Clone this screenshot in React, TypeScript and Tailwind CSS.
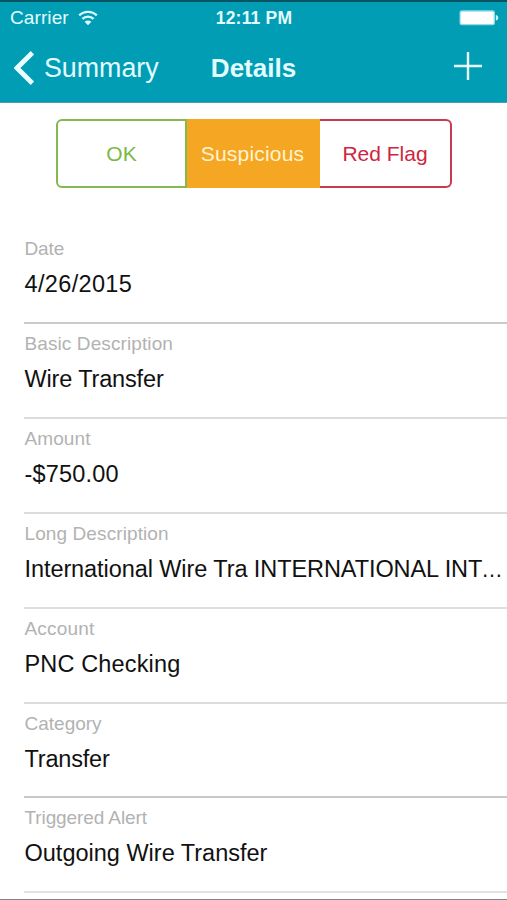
import React from 'react';

const fields = [
  { label: 'Date', value: '4/26/2015', labelSpacing: 'tracking-[-0.1px]', valueSpacing: 'tracking-[0.35px]', border: 'border-[#cbcbcb]' },
  { label: 'Basic Description', value: 'Wire Transfer', labelSpacing: 'tracking-[0.1px]', valueSpacing: 'tracking-[-0.15px]', border: 'border-[#dcdcdc]' },
  { label: 'Amount', value: '-$750.00', labelSpacing: 'tracking-[0.1px]', valueSpacing: 'tracking-[0.2px]', border: 'border-[#dcdcdc]' },
  { label: 'Long Description', value: 'International Wire Tra INTERNATIONAL INT', truncated: true, labelSpacing: 'tracking-[0.1px]', valueSpacing: 'tracking-[-0.08px]', border: 'border-[#dfdfdf]' },
  { label: 'Account', value: 'PNC Checking', labelSpacing: 'tracking-[0.2px]', valueSpacing: 'tracking-[0.15px]', border: 'border-[#dcdcdc]' },
  { label: 'Category', value: 'Transfer', labelSpacing: 'tracking-[0px]', valueSpacing: 'tracking-[-0.2px]', border: 'border-[#c8c8c8]' },
  { label: 'Triggered Alert', value: 'Outgoing Wire Transfer', labelSpacing: 'tracking-[-0.1px]', valueSpacing: 'tracking-[0px]', border: 'border-[#e2e2e2]' },
];

const WifiIcon: React.FC = () => (
  <svg className="ml-[9px] h-[16px] w-[20px]" viewBox="0 0 20 16" fill="none" stroke="#d9fbff" strokeWidth="2.3">
    <path d="M1.2 5.4C6.1.6 13.9.6 18.8 5.4" />
    <path d="M4.4 8.9C7.6 5.9 12.4 5.9 15.6 8.9" />
    <path d="M10 15.2 6.6 11.7C8.6 10.1 11.4 10.1 13.4 11.7Z" fill="#d9fbff" stroke="none" />
  </svg>
);

const BatteryIcon: React.FC = () => (
  <svg className="h-[16px] w-[40px]" viewBox="0 0 40 16">
    <rect x="0.5" y="0.3" width="35.5" height="15" rx="2.5" fill="#8fdce8" />
    <rect x="1.7" y="1.7" width="33" height="12.3" rx="1" fill="#fff" />
    <path d="M36.8 5C38.4 5.2 39.3 6.3 39.3 7.8S38.4 10.4 36.8 10.6Z" fill="#c9f3f8" />
  </svg>
);

const App: React.FC = () => {
  return (
    <div className="h-[900px] w-[507px] overflow-hidden border-b border-[#858585] bg-white font-['Liberation_Sans',Arial,sans-serif]">
      <header className="h-[103px] border-t-2 border-b border-t-[#075463] border-b-[#4a9dab] bg-[#019db5] text-[#e2fcff]">
        {/* Status bar */}
        <div className="grid h-[32px] grid-cols-3 items-center">
          <div className="flex items-center pl-[10px]">
            <span className="text-[19px] leading-[22px] tracking-[0.1px]">Carrier</span>
            <WifiIcon />
          </div>
          <span className="pl-[1px] text-center text-[17.5px] leading-[22px] font-bold tracking-[0.2px]">12:11 PM</span>
          <div className="flex justify-end pr-[8px]">
            <BatteryIcon />
          </div>
        </div>

        {/* Navigation bar */}
        <nav className="grid h-[68px] grid-cols-3 items-center">
          <button className="flex items-center pl-[14px]">
            <svg className="h-[34px] w-[21px]" viewBox="0 0 21 34" fill="none" stroke="#e9fdff" strokeWidth="4.8">
              <path d="M18.4 1.7 3 17 18.4 32.3" />
            </svg>
            <span className="ml-[9px] text-[26.8px] leading-[32px]">Summary</span>
          </button>
          <h1 className="text-center text-[26px] leading-[32px] font-bold">Details</h1>
          <button className="flex justify-end pr-[25px] pb-[4px]">
            <svg className="h-[28px] w-[28px]" viewBox="0 0 28 28" stroke="#e9fdff" strokeWidth="2.4">
              <path d="M14 0V28M0 14H28" />
            </svg>
          </button>
        </nav>
      </header>

      {/* Transaction status */}
      <div className="mt-4 ml-[56px] flex h-[69px] w-[396px] text-[21px]">
        <button className="w-[131px] rounded-l-[6px] border-2 border-[#84b850] text-[#79b946]">OK</button>
        <button className="w-[133px] bg-[#f5a623] pr-[2px] tracking-[0.2px] text-[#fff3cf]">Suspicious</button>
        <button className="w-[132px] rounded-r-[6px] border-2 border-l-0 border-[#c93c50] text-[#cf2540]">Red Flag</button>
      </div>

      <dl className="mt-[41.4px] ml-[24px]">
        {fields.map((field) => (
          <div key={field.label} className={`h-[94.83px] border-b-2 pt-[9px] ${field.border}`}>
            <dt className={`pl-[0.5px] text-[19px] leading-[22px] text-[#b2b2b2] ${field.labelSpacing}`}>{field.label}</dt>
            <dd className={`mt-[10px] pl-[0.5px] text-[23.5px] leading-[28px] whitespace-nowrap text-[#111] ${field.valueSpacing}`}>
              {field.value}
              {field.truncated && <span className="-ml-[1px] text-[21.5px]">…</span>}
            </dd>
          </div>
        ))}
      </dl>
    </div>
  );
};

export default App;
